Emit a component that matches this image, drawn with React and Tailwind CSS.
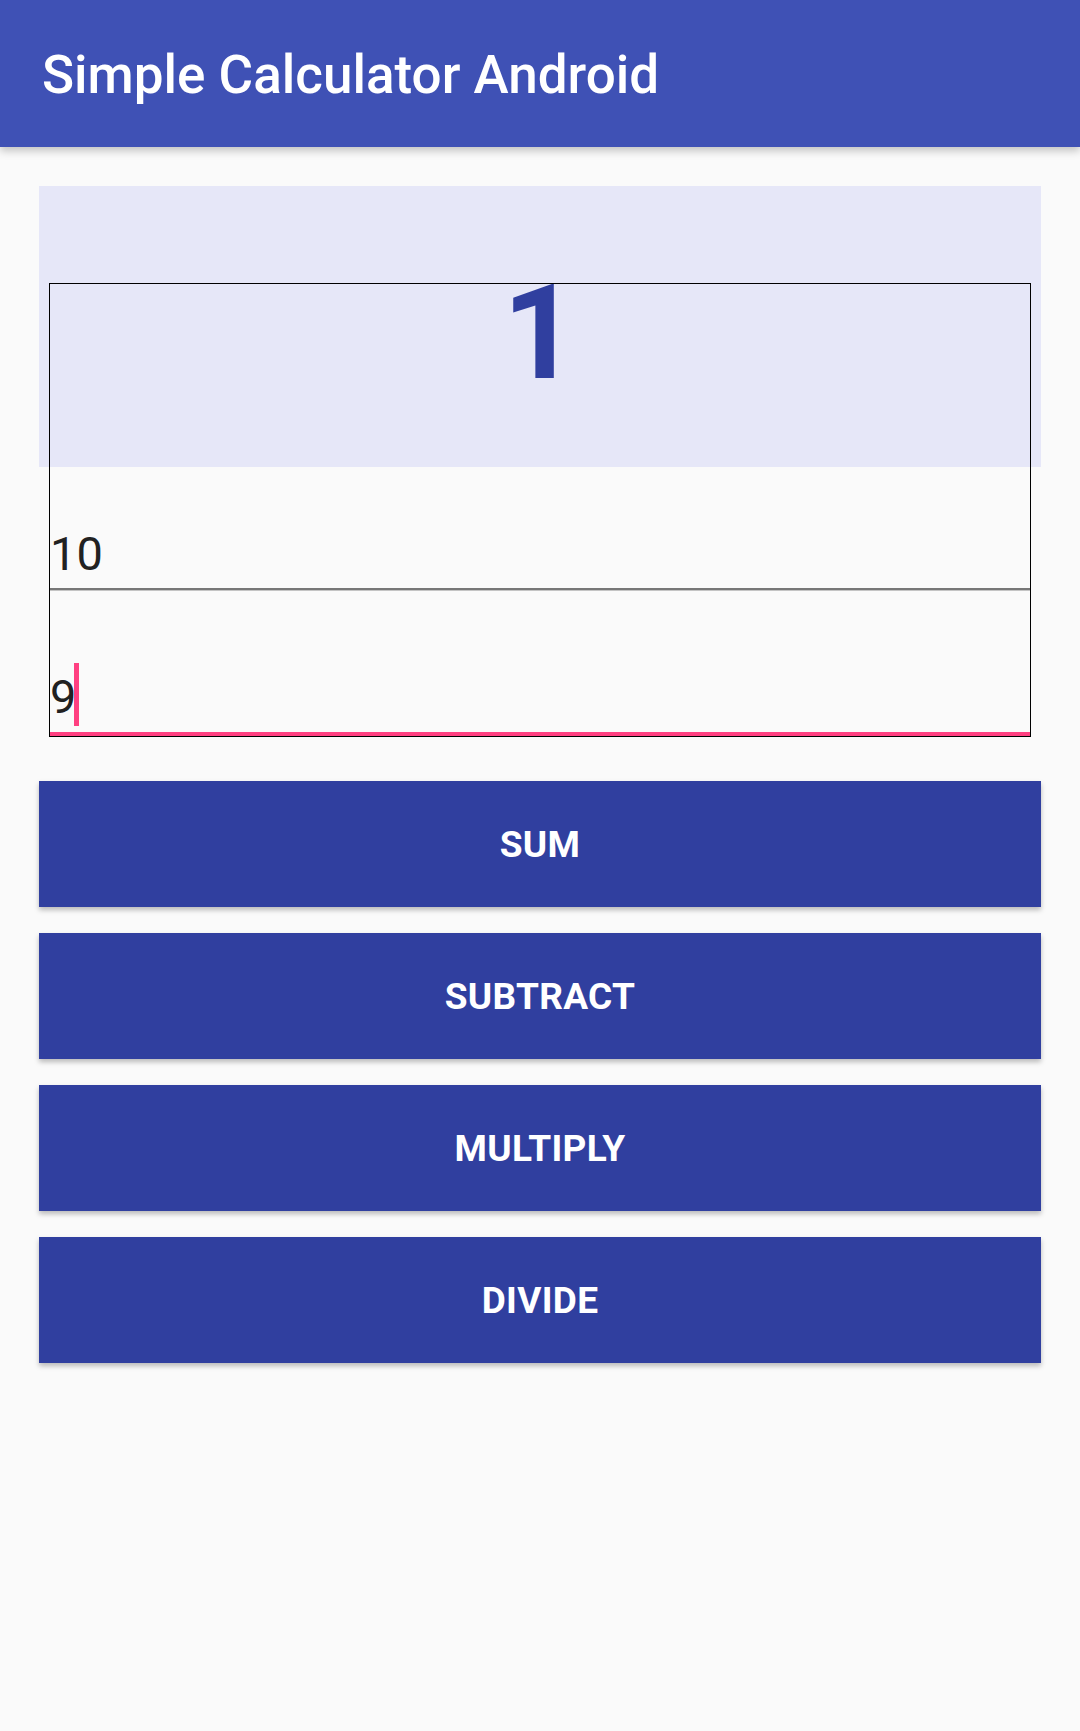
import React from "react";

function Btn({ label }) {
  return (
    <div className="h-[126px] bg-[#303f9f] shadow-[0_3px_5px_rgba(0,0,0,0.26)] flex items-center justify-center">
      <span className="text-white font-bold text-[37px] leading-none tracking-[0.3px]">{label}</span>
    </div>
  );
}

export default function App() {
  return (
    <div className="w-full min-h-[1731px] bg-[#fafafa] font-['Roboto',sans-serif]">
      <div className="relative z-10 h-[147px] bg-[#3f51b5] shadow-[0_4px_8px_rgba(0,0,0,0.22)] flex items-center pl-[42px] pt-[3px]">
        <span className="text-white text-[53px] font-medium leading-none">Simple Calculator Android</span>
      </div>
      <div className="px-[39px] pt-[39px]">
        <div className="h-[281px] bg-[#e6e7f8] flex justify-center pt-[82px]">
          <span className="text-[#303f9f] font-bold text-[131px] leading-none h-[131px]">1</span>
        </div>
        <div className="relative -mt-[184px] mx-[10px] h-[454px] border border-black flex flex-col">
          <div className="h-[304px] flex items-end">
            <span className="text-[#212121] text-[47px] leading-none mb-[11px]">10</span>
          </div>
          <div className="h-[2px] bg-[#777777]" />
          <div className="h-[1px] bg-[#c4c4c4]" />
          <div className="h-[141px] flex items-end">
            <span className="text-[#212121] text-[47px] leading-none mb-[12px]">9</span>
            <div className="w-[5px] h-[63px] bg-[#ff4081] -ml-[2px] mb-[6px]" />
          </div>
          <div className="h-[4px] bg-[#ff4081]" />
        </div>
        <div className="mt-[44px] flex flex-col gap-[26px]">
          <Btn label="SUM" />
          <Btn label="SUBTRACT" />
          <Btn label="MULTIPLY" />
          <Btn label="DIVIDE" />
        </div>
      </div>
    </div>
  );
}
